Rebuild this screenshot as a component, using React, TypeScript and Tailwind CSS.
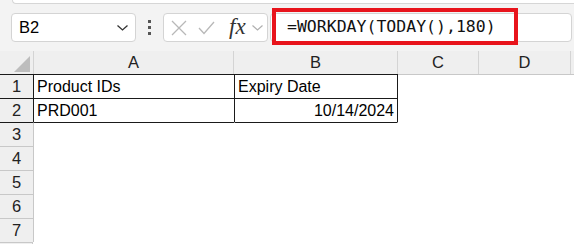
import React from "react";

const cols = [
  { k: "A", w: 200 },
  { k: "B", w: 164 },
  { k: "C", w: 81 },
  { k: "D", w: 92 },
];

export default function App() {
  const rows = [1, 2, 3, 4, 5, 6, 7];
  return (
    <div
      className="relative w-[574px] h-[244px] overflow-hidden bg-[#f3f3f3] flex flex-col"
      style={{ fontFamily: '"Liberation Sans", Arial, sans-serif' }}
    >
      {/* top ribbon edge */}
      <div className="ml-[12px] h-[4px] bg-white border-b border-l border-[#d6d6d6] rounded-bl-[4px]" />

      {/* formula row */}
      <div className="mt-[9px] h-[29px] flex items-stretch">
        <div className="ml-[11px] w-[125px] bg-white border border-[#d4d4d4] rounded-[4px] flex items-center pl-[7px] pr-[7px]">
          <span className="text-[16.5px] text-black flex-1">B2</span>
          <svg width="11" height="6" viewBox="0 0 11 6">
            <path d="M0.5 0.5 L5.5 5 L10.5 0.5" fill="none" stroke="#333" strokeWidth="1.3" />
          </svg>
        </div>
        <div className="w-[27px] flex flex-col items-center justify-center gap-[3px]">
          <div className="w-[3px] h-[3px] bg-[#555]" />
          <div className="w-[3px] h-[3px] bg-[#555]" />
          <div className="w-[3px] h-[3px] bg-[#555]" />
        </div>
        <div className="w-[105px] bg-white border border-[#d4d4d4] rounded-[4px] flex items-center pl-[7px]">
          <svg width="16" height="16" viewBox="0 0 16 16">
            <path d="M1 1 L15 15 M15 1 L1 15" stroke="#b8b8b8" strokeWidth="1.3" fill="none" />
          </svg>
          <svg width="17" height="14" viewBox="0 0 17 14" className="ml-[11px]">
            <path d="M1 7 L6 12.5 L16 1" stroke="#b8b8b8" strokeWidth="1.3" fill="none" />
          </svg>
          <span
            className="ml-[14px] text-[23px] italic text-[#333] leading-none -mt-[2px]"
            style={{ fontFamily: '"Liberation Serif", "Times New Roman", serif' }}
          >
            fx
          </span>
          <svg width="11" height="6" viewBox="0 0 11 6" className="ml-[6px]">
            <path d="M0.5 0.5 L5.5 5 L10.5 0.5" fill="none" stroke="#b0b0b0" strokeWidth="1.2" />
          </svg>
        </div>
        <div className="ml-[2px] w-[302px] bg-white border border-[#d4d4d4] rounded-[4px] flex items-center pl-[16px]">
          <span
            className="text-[16.5px] text-[#111] leading-none"
            style={{ fontFamily: '"DejaVu Sans Mono", "Liberation Mono", monospace' }}
          >
            =WORKDAY(TODAY(),180)
          </span>
        </div>
      </div>

      {/* red highlight annotation */}
      <div className="absolute left-[272px] top-[8px] w-[246px] h-[37px] border-[4px] border-[#e8141c]" />

      {/* sheet */}
      <div className="mt-[9px] flex flex-col flex-1">
        {/* header row */}
        <div className="flex h-[23px]">
          <div className="w-[33px] bg-[#efefef] relative">
            <svg width="17" height="16" viewBox="0 0 17 16" className="absolute left-[14px] top-[5px]">
              <path d="M16 0 L16 16 L0 16 Z" fill="#bdbdbd" />
            </svg>
          </div>
          {cols.map((c) => (
            <div
              key={c.k}
              style={{ width: c.w }}
              className="bg-[#efefef] border-l border-[#d4d4d4] flex items-center justify-center text-[16.5px] text-[#222]"
            >
              {c.k}
            </div>
          ))}
          <div className="flex-1 bg-[#efefef] border-l border-[#d4d4d4]" />
        </div>
        {rows.map((r) => {
          const inTable = r <= 2;
          return (
            <div key={r} className="flex h-[24px]">
              <div
                className={`w-[33px] bg-[#efefef] border-t flex items-center justify-center text-[16.5px] text-[#222] ${
                  r <= 3 ? "border-[#1a1a1a]" : "border-[#c8c8c8]"
                }`}
              >
                {r}
              </div>
              {/* A */}
              <div
                className={`w-[201px] bg-white flex items-center pl-[3px] text-[16px] text-black border-l ${
                  inTable || r === 3 ? "border-t border-t-[#1a1a1a]" : ""
                } ${inTable ? "border-l-[#1a1a1a]" : "border-l-[#c8c8c8]"}`}
              >
                {r === 1 ? "Product IDs" : r === 2 ? "PRD001" : ""}
              </div>
              {/* B */}
              <div
                className={`w-[164px] bg-white flex items-center text-[16px] text-black ${
                  inTable ? "border-l border-r border-[#1a1a1a]" : "border-l border-r border-transparent"
                } ${inTable || r === 3 ? "border-t border-t-[#1a1a1a]" : ""} ${
                  r === 2 ? "justify-end pr-[3px]" : "pl-[3px]"
                }`}
              >
                {r === 1 ? "Expiry Date" : r === 2 ? "10/14/2024" : ""}
              </div>
              <div
                className={`flex-1 bg-white ${r === 1 ? "border-t border-[#c8c8c8]" : ""}`}
              />
            </div>
          );
        })}
        <div className="flex flex-1">
          <div className="w-[33px] bg-[#efefef] border-t border-r border-[#c8c8c8]" />
          <div className="flex-1 bg-white" />
        </div>
      </div>
    </div>
  );
}
